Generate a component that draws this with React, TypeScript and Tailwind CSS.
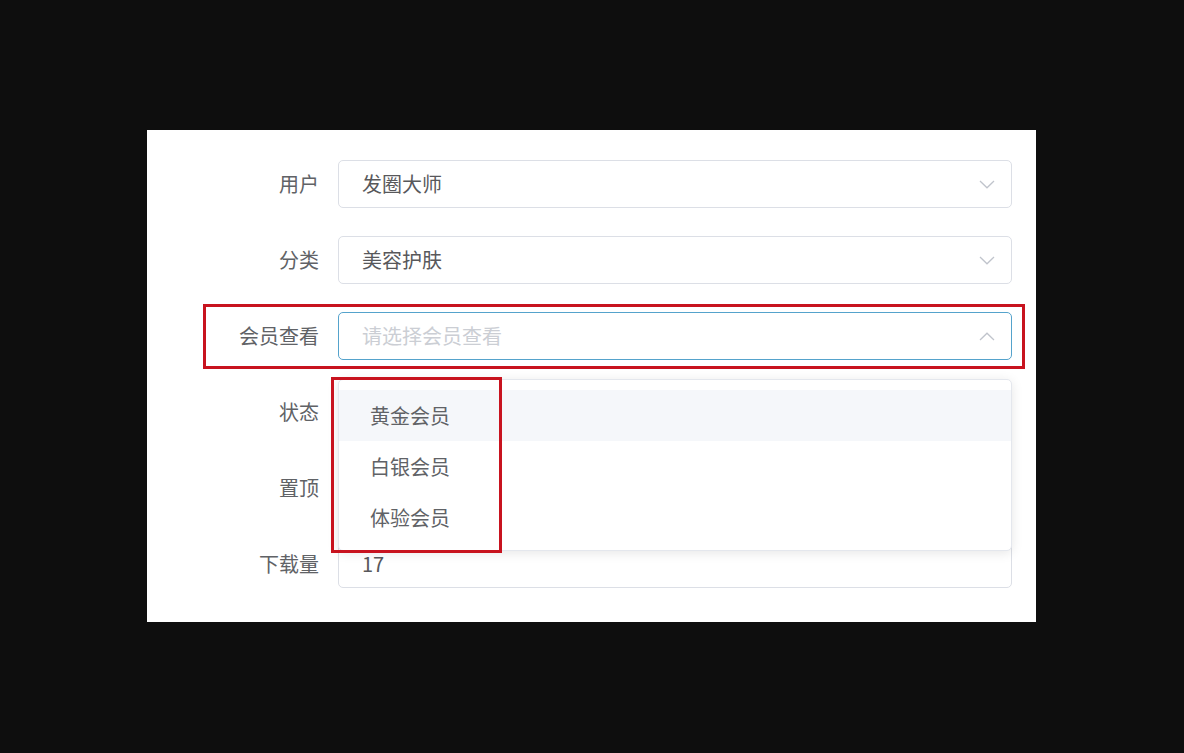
import React from "react";

const font = { fontFamily: '"Noto Sans CJK SC", "Noto Sans", sans-serif' };

function Chevron({ up = false }: { up?: boolean }) {
  return (
    <svg width="16" height="9" viewBox="0 0 16 9" className="shrink-0">
      <path
        d={up ? "M1 8 L8 1.2 L15 8" : "M1 1 L8 7.8 L15 1"}
        fill="none"
        stroke="#c0c4cc"
        strokeWidth="1.3"
      />
    </svg>
  );
}

function Row({
  label,
  children,
}: {
  label: string;
  children?: React.ReactNode;
}) {
  return (
    <div className="flex items-center h-[48px]">
      <div className="w-[172px] text-right text-[20px] text-[#606266] leading-none">
        {label}
      </div>
      <div className="ml-[19px] w-[674px] h-[48px]">{children}</div>
    </div>
  );
}

function SelectBox({
  value,
  placeholder,
  focused = false,
}: {
  value?: string;
  placeholder?: string;
  focused?: boolean;
}) {
  return (
    <div
      className={`h-full w-full rounded-[5px] border bg-white flex items-center pl-[23px] pr-[16px] ${
        focused ? "border-[#55a3cc]" : "border-[#dcdfe6]"
      }`}
    >
      <span
        className={`flex-1 text-[20px] leading-none ${
          value ? "text-[#58585b]" : "text-[#cbced4]"
        }`}
      >
        {value ?? placeholder}
      </span>
      <Chevron up={focused} />
    </div>
  );
}

export default function App() {
  return (
    <div
      className="w-[1184px] h-[753px] bg-[#0e0e0e] pt-[130px] pl-[147px]"
      style={font}
    >
      <div className="relative w-[889px] h-[492px] bg-white pt-[30px] flex flex-col gap-[28px]">
        <Row label="用户">
          <SelectBox value="发圈大师" />
        </Row>
        <Row label="分类">
          <SelectBox value="美容护肤" />
        </Row>
        <Row label="会员查看">
          <SelectBox placeholder="请选择会员查看" focused />
        </Row>
        <Row label="状态" />
        <Row label="置顶" />
        <Row label="下载量">
          <div className="h-full w-full rounded-[5px] border border-[#dcdfe6] flex items-center pl-[23px] text-[20px] text-[#58585b] leading-none">
            17
          </div>
        </Row>

        {/* annotation around 会员查看 */}
        <div className="absolute left-[56px] top-[174px] w-[822px] h-[65px] border-[3px] border-[#c8131f] pointer-events-none" />

        {/* dropdown */}
        <div className="absolute left-[191px] top-[249px] w-[674px] h-[172px] bg-white rounded-[5px] border border-[#e4e7ed] shadow-[0_2px_12px_rgba(0,0,0,0.1)] pt-[10px]">
          <div className="h-[51px] bg-[#f5f7fa] flex items-center pl-[31px] text-[20px] text-[#606266] leading-none">
            黄金会员
          </div>
          <div className="h-[51px] flex items-center pl-[31px] text-[20px] text-[#606266] leading-none">
            白银会员
          </div>
          <div className="h-[51px] flex items-center pl-[31px] text-[20px] text-[#606266] leading-none">
            体验会员
          </div>
        </div>

        {/* annotation around options */}
        <div className="absolute left-[184px] top-[247px] w-[171px] h-[176px] border-[3px] border-[#c8131f] pointer-events-none" />
      </div>
    </div>
  );
}
